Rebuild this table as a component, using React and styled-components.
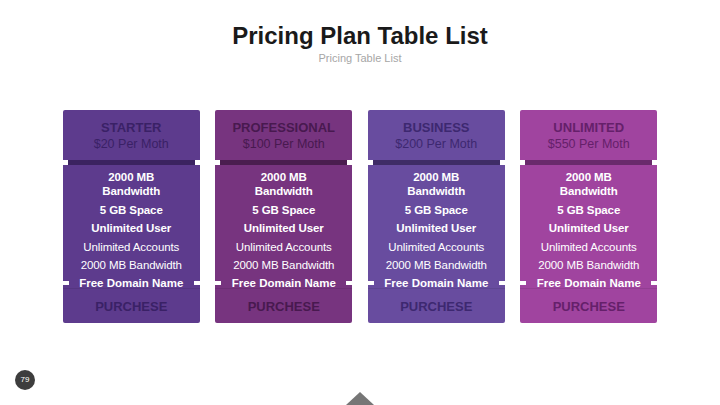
import React from "react";
import styled, { createGlobalStyle } from "styled-components";

const plans = [
    { name: "STARTER", price: "$20 Per Moth", bg: "#5d3b8d", ink: "#3a2166", band: "#3b2360" },
    { name: "PROFESSIONAL", price: "$100 Per Moth", bg: "#77347f", ink: "#48194f", band: "#4a1d4f" },
    { name: "BUSINESS", price: "$200 Per Moth", bg: "#684c9f", ink: "#3d2870", band: "#3f2c66" },
    { name: "UNLIMITED", price: "$550 Per Moth", bg: "#a0449f", ink: "#65206a", band: "#6a2a6c" },
];

const features = [
    { text: "2000 MB\nBandwidth", bold: true },
    { text: "5 GB Space", bold: true },
    { text: "Unlimited User", bold: true },
    { text: "Unlimited Accounts", bold: false },
    { text: "2000 MB Bandwidth", bold: false },
];

const GlobalStyle = createGlobalStyle`
  body {
    margin: 0;
    background: #fff;
    font-family: "Liberation Sans", Arial, sans-serif;
  }
`;

const Page = styled.div`
  position: relative;
  width: 720px;
  height: 405px;
  overflow: hidden;
  background: #fff;
`;

const Heading = styled.header`
  display: flex;
  flex-direction: column;
  align-items: center;
  padding-top: 22px;
`;

const Title = styled.h1`
  margin: 0;
  font-size: 24px;
  font-weight: 700;
  color: #1a1a1a;
  line-height: 28px;
`;

const Subtitle = styled.div`
  font-size: 11px;
  color: #a6a6a6;
  line-height: 14px;
  margin-top: 1px;
`;

const Cards = styled.div`
  display: grid;
  grid-template-columns: repeat(4, 137px);
  column-gap: 15.5px;
  justify-content: center;
  margin-top: 45px;
`;

const Card = styled.div`
  display: flex;
  flex-direction: column;
  color: #fff;
  text-align: center;
`;

const Head = styled.div`
  height: 50px;
  background: ${p => p.$bg};
  color: ${p => p.$ink};
  border-radius: 2px 2px 0 0;
  display: flex;
  flex-direction: column;
  justify-content: center;
  padding-top: 2px;
  box-sizing: border-box;
`;

const PlanName = styled.div`
  font-size: 13px;
  font-weight: 700;
  line-height: 16px;
`;

const Price = styled.div`
  font-size: 12.5px;
  line-height: 17px;
`;

const Band = styled.div`
  position: relative;
  height: 5px;
  background: ${p => p.$band};
  &::before, &::after {
    content: "";
    position: absolute;
    top: 0;
    width: 5px;
    height: 5px;
    background: #fff;
  }
  &::before { left: 0; }
  &::after { right: 0; }
`;

const Body = styled.div`
  background: ${p => p.$bg};
  padding-top: 5px;
  height: 108px;
  display: flex;
  flex-direction: column;
  align-items: center;
`;

const Feature = styled.div`
  font-size: 11.5px;
  font-weight: ${p => (p.$bold ? 700 : 400)};
  line-height: 14px;
  margin-bottom: 4.5px;
  white-space: pre-line;
  letter-spacing: -0.1px;
`;

const Domain = styled.div`
  position: relative;
  background: ${p => p.$bg};
  font-size: 11.5px;
  font-weight: 700;
  line-height: 10px;
  height: 10px;
  &::before, &::after {
    content: "";
    position: absolute;
    top: 3px;
    width: 6px;
    height: 4px;
    background: #fff;
  }
  &::before { left: 0; }
  &::after { right: 0; }
`;

const Purchase = styled.div`
  height: 35px;
  background: ${p => p.$bg};
  color: ${p => p.$ink};
  font-size: 13px;
  font-weight: 700;
  line-height: 36px;
  border-top: 1px solid rgba(0, 0, 0, 0.08);
  box-sizing: border-box;
  border-radius: 0 0 2px 2px;
`;

const PageBadge = styled.div`
  position: absolute;
  left: 15px;
  top: 370px;
  width: 20px;
  height: 20px;
  border-radius: 50%;
  background: #3d3d3d;
  color: #fff;
  font-size: 8px;
  line-height: 20px;
  text-align: center;
`;

const Pointer = styled.div`
  position: absolute;
  left: 346px;
  bottom: 0;
  width: 0;
  height: 0;
  border-left: 14px solid transparent;
  border-right: 14px solid transparent;
  border-bottom: 13px solid #767676;
`;

export default function App() {
    return (
        <Page>
            <GlobalStyle />
            <Heading>
                <Title>Pricing Plan Table List</Title>
                <Subtitle>Pricing Table List</Subtitle>
            </Heading>
            <Cards>
                {plans.map(plan => (
                    <Card key={plan.name}>
                        <Head $bg={plan.bg} $ink={plan.ink}>
                            <PlanName>{plan.name}</PlanName>
                            <Price>{plan.price}</Price>
                        </Head>
                        <Band $band={plan.band} />
                        <Body $bg={plan.bg}>
                            {features.map(f => (
                                <Feature key={f.text} $bold={f.bold}>{f.text}</Feature>
                            ))}
                        </Body>
                        <Domain $bg={plan.bg}>Free Domain Name</Domain>
                        <Purchase $bg={plan.bg} $ink={plan.ink}>PURCHESE</Purchase>
                    </Card>
                ))}
            </Cards>
            <PageBadge>79</PageBadge>
            <Pointer />
        </Page>
    );
}
